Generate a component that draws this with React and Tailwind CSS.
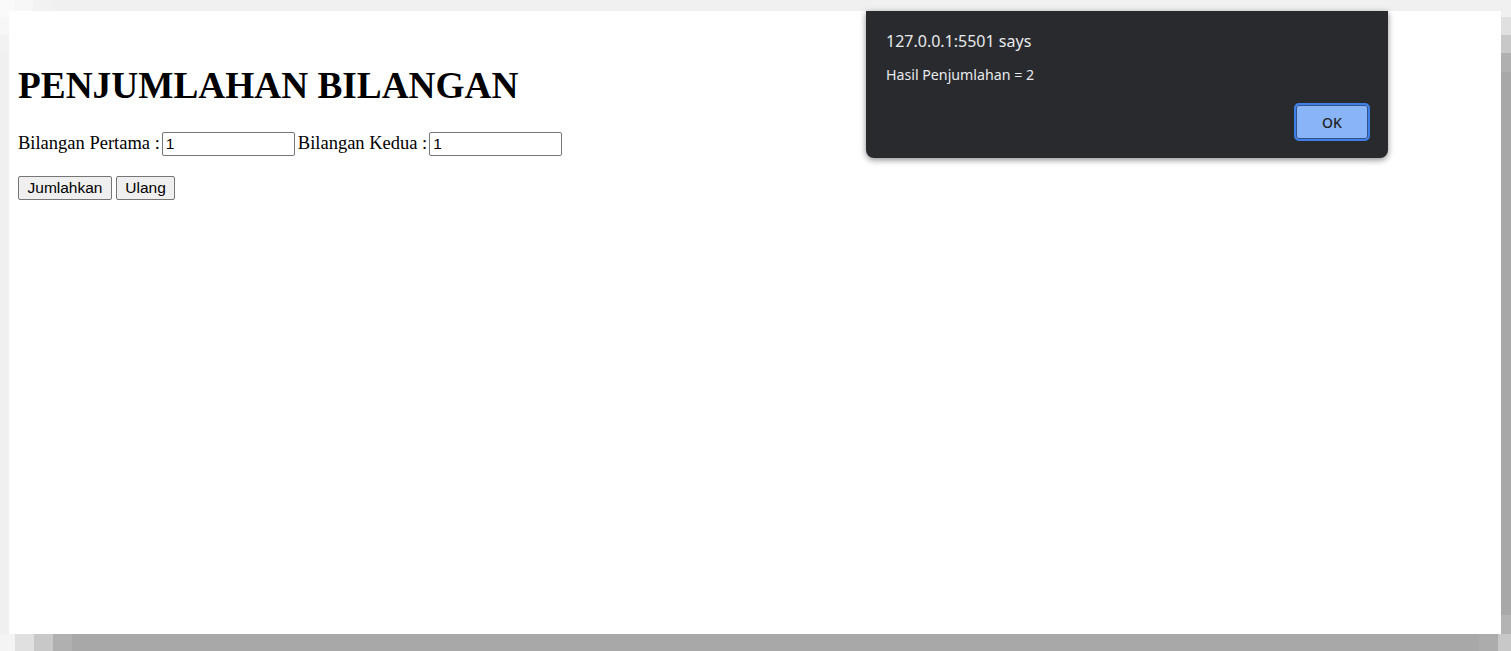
import React from "react";

const serif = { fontFamily: '"Liberation Serif", "Times New Roman", serif' };

const AlertDialog = () => (
  <div
    className="absolute left-[857px] top-0 w-[522px] h-[147px] bg-[#292a2d] rounded-b-[8px] shadow-[0_2px_6px_rgba(0,0,0,0.45)] pt-[19px] pl-[20px] pr-[18px] pb-[17px] flex flex-col"
    style={{ fontFamily: '"Noto Sans", "Open Sans", sans-serif' }}
  >
    <p className="text-[16px] leading-[22px] text-[#e8eaed]">127.0.0.1:5501 says</p>
    <p className="mt-[13px] text-[14.2px] leading-[20px] text-[#e8eaed]">Hasil Penjumlahan = 2</p>
    <div className="mt-[18px] flex justify-end">
      <button className="w-[76px] h-[38px] rounded-[5px] bg-[#8ab4f8] border-2 border-[#3d7fe6] shadow-[inset_0_0_0_1px_#33528a] text-[14px] font-medium text-[#202124]">
        OK
      </button>
    </div>
  </div>
);

export default function App() {
  return (
    <div className="w-[1511px] h-[651px] flex flex-col bg-[#f0f0f0] overflow-hidden">
      <div className="h-[11px] bg-[linear-gradient(to_right,#fafafa_15px,#f7f7f7_15px,#f7f7f7_33px,#f2f2f2_33px,#f2f2f2_53px,#f0f0f0_53px)]" />
      <div className="flex-1 flex">
        <div className="w-[9px] bg-[linear-gradient(to_bottom,#fafafa_6px,#f7f7f7_6px,#f7f7f7_24px,#f2f2f2_24px,#f2f2f2_42px,#f0f0f0_42px)]" />
        <div className="relative flex-1 bg-white pt-[53px] pl-[9px]" style={serif}>
          <h1 className="text-[37.3px] leading-[43px] font-bold text-black">PENJUMLAHAN BILANGAN</h1>

          <div className="mt-[25px] flex items-start text-[18.5px] text-black">
            <span className="leading-[22px]">Bilangan Pertama :</span>
            <input
              defaultValue="1"
              className="ml-[2px] w-[133px] h-[24px] border border-[#767676] rounded-[2px] px-[3px] text-[15.5px] text-black bg-white outline-none"
              style={{ fontFamily: '"Liberation Sans", Arial, sans-serif' }}
            />
            <span className="ml-[3px] leading-[22px]">Bilangan Kedua :</span>
            <input
              defaultValue="1"
              className="ml-[2px] w-[133px] h-[24px] border border-[#767676] rounded-[2px] px-[3px] text-[15.5px] text-black bg-white outline-none"
              style={{ fontFamily: '"Liberation Sans", Arial, sans-serif' }}
            />
          </div>

          <div className="mt-[20px] flex gap-[4px]" style={{ fontFamily: '"Liberation Sans", Arial, sans-serif' }}>
            <button className="w-[94px] h-[24px] bg-[#efefef] border border-[#767676] rounded-[2px] text-[15.5px] text-black leading-none">
              Jumlahkan
            </button>
            <button className="w-[59px] h-[24px] bg-[#efefef] border border-[#767676] rounded-[2px] text-[15.5px] text-black leading-none">
              Ulang
            </button>
          </div>

          <AlertDialog />
        </div>
        <div className="w-[10px] bg-[linear-gradient(to_bottom,#f0f0f0_6px,#e0e0e0_6px,#e0e0e0_24px,#c8c8c8_24px,#c8c8c8_42px,#b0b0b0_42px,#b0b0b0_61px,#a8a8a8_61px,#a8a8a8_calc(100%_-_19px),#b4b4b4_calc(100%_-_19px))]" />
      </div>
      <div className="h-[17px] bg-[linear-gradient(to_right,#f4f4f4_15px,#e0e0e0_15px,#e0e0e0_34px,#c8c8c8_34px,#c8c8c8_53px,#b0b0b0_53px,#b0b0b0_72px,#a8a8a8_72px,#a8a8a8_calc(100%_-_32px),#acacac_calc(100%_-_32px),#acacac_calc(100%_-_13px),#c8c8c8_calc(100%_-_13px))]" />
    </div>
  );
}
